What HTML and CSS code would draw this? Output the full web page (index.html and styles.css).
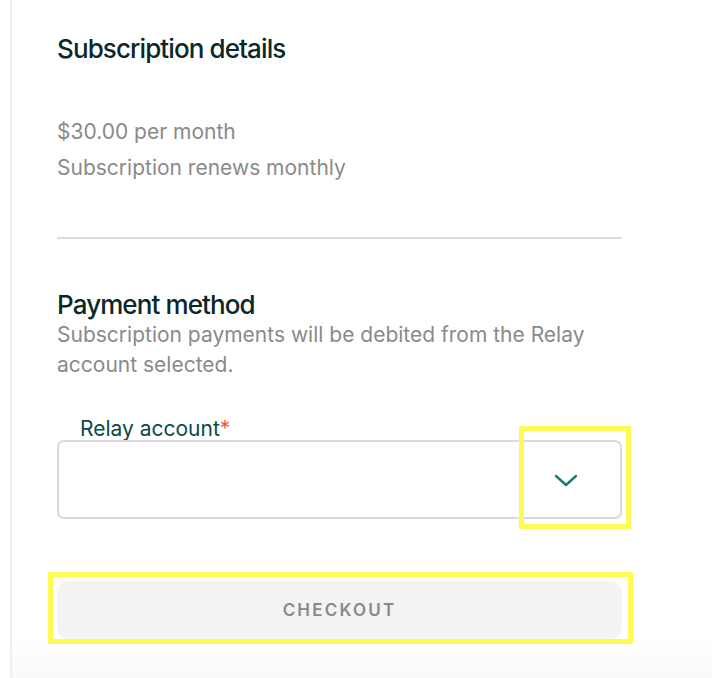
FILE: index.html
```html
<!DOCTYPE html>
<html lang="en">
<head>
<meta charset="utf-8">
<title>Subscription checkout</title>
<link rel="stylesheet" href="styles.css">
</head>
<body>
<div class="page">
  <main class="panel">
    <section class="details">
      <h2 class="title">Subscription details</h2>
      <div class="price">
        <p class="muted">$30.00 per month</p>
        <p class="muted">Subscription renews monthly</p>
      </div>
    </section>
    <hr class="divider">
    <section class="payment">
      <h2 class="title">Payment method</h2>
      <p class="muted">Subscription payments will be debited from the Relay account selected.</p>
      <div class="field">
        <label class="label">Relay account<span class="req">*</span></label>
        <div class="select">
          <span class="value"></span>
          <span class="chevron">
            <svg width="24" height="14" viewBox="0 0 24 14" fill="none"><path d="M2 2 L12 11 L22 2" stroke="#1b7a7c" stroke-width="2.4" stroke-linecap="round" stroke-linejoin="round"/></svg>
          </span>
          <span class="highlight hl-chevron"></span>
        </div>
      </div>
      <div class="button-wrap">
        <button class="checkout" type="button">CHECKOUT</button>
        <span class="highlight hl-button"></span>
      </div>
    </section>
  </main>
</div>
</body>
</html>
```

FILE: styles.css
```css
html, body {
  margin: 0;
  padding: 0;
  background: #ffffff;
}
body {
  font-family: Inter, "Noto Sans", "Liberation Sans", sans-serif;
  height: 678px;
  overflow: hidden;
}
.page {
  margin-left: 10px;
  border-left: 2px solid #f0f0f2;
  height: 678px;
  background: linear-gradient(to bottom, #ffffff 0, #ffffff 640px, #f9f9f9 678px);
}
.panel {
  width: 565px;
  padding: 34px 0 0 45px;
}
.title {
  margin: 0;
  font-size: 26px;
  font-weight: 500;
  letter-spacing: -0.9px;
  color: #0b2828;
  line-height: 30px;
}
.muted {
  margin: 0;
  font-size: 21px;
  line-height: 36px;
  color: #8a8a8a;
}
.price {
  margin-top: 50px;
}
.divider {
  border: 0;
  height: 2px;
  background: #dcdce0;
  margin: 51px 0 0 0;
}
.payment {
  margin-top: 51px;
}
.payment .muted {
  line-height: 30px;
}
.field {
  margin-top: 38px;
}
.label {
  display: block;
  padding-left: 23px;
  font-size: 21px;
  line-height: 22px;
  color: #0d4a48;
}
.req {
  color: #f0583a;
}
.select {
  position: relative;
  box-sizing: border-box;
  height: 79px;
  margin-top: 0;
  border: 2px solid #d9d9de;
  border-radius: 7px;
  display: flex;
  align-items: center;
  justify-content: flex-end;
}
.chevron {
  display: flex;
  width: 24px;
  margin-right: 42px;
  margin-top: 2px;
}
.highlight {
  position: absolute;
  border: 5px solid #fffb55;
  box-sizing: border-box;
  pointer-events: none;
}
.hl-chevron {
  right: -11px;
  top: -16px;
  width: 112px;
  height: 103px;
}
.button-wrap {
  position: relative;
  margin-top: 62px;
}
.checkout {
  display: block;
  width: 100%;
  height: 58px;
  border: 0;
  border-radius: 12px;
  background: #f3f3f3;
  color: #8a8a8a;
  font-family: Inter, "Noto Sans", "Liberation Sans", sans-serif;
  font-size: 17px;
  font-weight: 600;
  letter-spacing: 2.2px;
}
.hl-button {
  left: -9px;
  right: -11px;
  top: -9px;
  bottom: -5px;
}
```
